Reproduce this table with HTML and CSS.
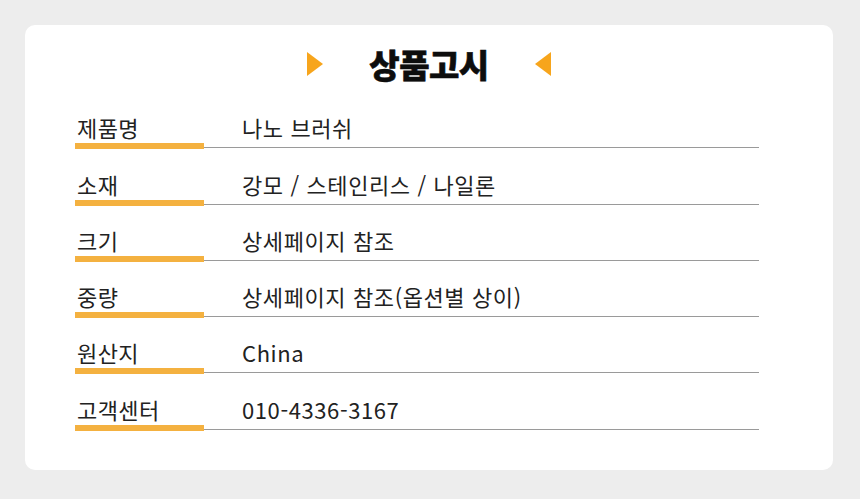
FILE: index.html
```html
<!DOCTYPE html>
<html lang="ko">
<head>
<meta charset="utf-8">
<link rel="stylesheet" href="styles.css">
</head>
<body>
<div class="card">
  <div class="title">
    <svg class="tri" width="16" height="24" viewBox="0 0 16 24"><polygon points="0,0 16,12 0,24" fill="#f7a51c"/></svg>
    <h1>상품고시</h1>
    <svg class="tri" width="16" height="24" viewBox="0 0 16 24"><polygon points="16,0 0,12 16,24" fill="#f7a51c"/></svg>
  </div>
  <div class="table">
    <div class="row"><div class="label">제품명</div><div class="value">나노 브러쉬</div></div>
    <div class="row"><div class="label">소재</div><div class="value">강모 / 스테인리스 / 나일론</div></div>
    <div class="row"><div class="label">크기</div><div class="value">상세페이지 참조</div></div>
    <div class="row"><div class="label">중량</div><div class="value">상세페이지 참조(옵션별 상이)</div></div>
    <div class="row"><div class="label">원산지</div><div class="value">China</div></div>
    <div class="row"><div class="label">고객센터</div><div class="value">010-4336-3167</div></div>
  </div>
</div>
</body>
</html>
```
FILE: styles.css
```css
html, body {
  margin: 0;
  padding: 0;
  background: #ededed;
}
body {
  padding: 25px 27px 29px 25px;
  font-family: "Noto Sans CJK KR", "Noto Sans", sans-serif;
}
.card {
  background: #fff;
  border-radius: 10px;
  width: 808px;
  height: 445px;
  box-sizing: border-box;
  padding: 20px 74px 0 50px;
}
.title {
  display: flex;
  justify-content: center;
  align-items: center;
  gap: 46px;
  height: 38px;
  margin: 0 -74px 10px -50px;
}
.title h1 {
  margin: 0;
  font-size: 33px;
  font-weight: 900;
  line-height: 38px;
  color: #0d0d0d;
  letter-spacing: -0.5px;
  -webkit-text-stroke: 0.6px #0d0d0d;
}
.tri {
  display: block;
}
.row {
  display: flex;
  align-items: flex-end;
  height: 56.3px;
}
.label {
  width: 129px;
  flex: none;
  font-size: 22px;
  line-height: 30px;
  letter-spacing: 0.4px;
  padding-left: 2px;
  box-sizing: border-box;
  padding-bottom: 1px;
  border-bottom: 6px solid #f4b140;
  color: #222;
}
.value {
  flex: 1;
  font-size: 22px;
  line-height: 30px;
  letter-spacing: 0.6px;
  padding-left: 38px;
  padding-bottom: 5px;
  margin-bottom: 1px;
  border-bottom: 1px solid #9a9a9a;
  color: #222;
}
```
